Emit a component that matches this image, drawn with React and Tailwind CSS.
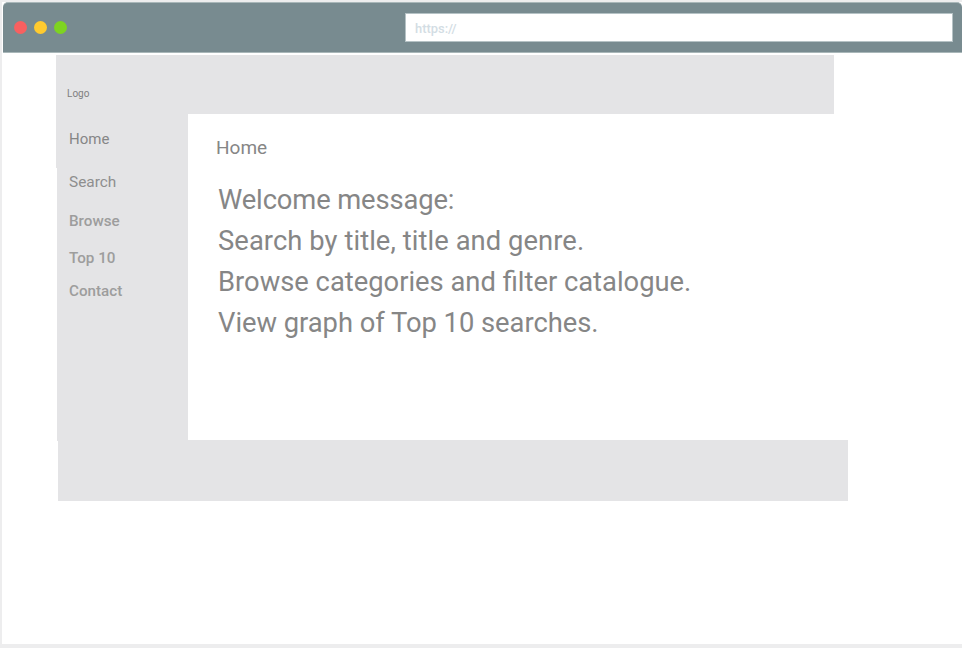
const navItems = [
  { label: "Home", style: "mt-[25px] text-[15px] font-normal text-[#868686]" },
  { label: "Search", style: "mt-[23px] text-[15.4px] font-normal text-[#8e8e8e]" },
  { label: "Browse", style: "mt-[19px] text-[15.2px] font-medium text-[#9d9d9d]" },
  { label: "Top 10", style: "mt-[17px] text-[15.2px] font-medium text-[#9d9d9d]" },
  { label: "Contact", style: "mt-[13px] text-[15.2px] font-medium text-[#9d9d9d]" },
];

const welcomeLines = [
  { text: "Welcome message:", style: "tracking-[-0.12px]" },
  { text: "Search by title, title and genre.", style: "tracking-[0.07px]" },
  { text: "Browse categories and filter catalogue.", style: "tracking-normal" },
  { text: "View graph of Top 10 searches.", style: "tracking-[-0.03px]" },
];

function BrowserBar() {
  return (
    <header className="flex h-[51px] items-start rounded-t-[5px] border-y border-[#a9b7b9] bg-[#788b90] pr-[9px] pl-[11px]">
      <div className="mt-[18px] flex gap-[7px]">
        <span className="size-[13px] rounded-full bg-[#f86060]" />
        <span className="size-[13px] rounded-full bg-[#ffcb2f]" />
        <span className="size-[13px] rounded-full bg-[#7ed321]" />
      </div>
      <div className="mt-[10px] ml-auto flex h-[29px] w-[548px] items-center border border-[#b5c2c5] bg-white pt-[2px] pl-[9px] text-[12.9px] font-medium text-[#d3dde4]">
        https://
      </div>
    </header>
  );
}

function Sidebar() {
  return (
    <nav className="-mb-px flex w-[132px] shrink-0 flex-col bg-[#e4e4e6] [clip-path:polygon(0_0,100%_0,100%_100%,1px_100%,1px_54px,0_54px)]">
      <ul className="-mt-[10px] pl-[13px] leading-5">
        {navItems.map((item) => (
          <li key={item.label} className={item.style}>
            {item.label}
          </li>
        ))}
      </ul>
    </nav>
  );
}

export default function App() {
  return (
    <div className="h-[648px] w-[962px] overflow-hidden bg-[#ededee] pt-[2px] pl-[2px] font-['Roboto',sans-serif]">
      <div className="h-[642px] bg-white">
        <div className="pl-px">
          <BrowserBar />
        </div>
        <div className="mt-[2px] ml-[54px] h-[59px] w-[778px] bg-[#e4e4e6] pt-[33px] pl-[11px] text-[10px] leading-3 text-[#808080]">
          Logo
        </div>
        <div className="ml-[54px] flex h-[326px]">
          <Sidebar />
          <main className="pl-[28px] text-[#868686]">
            <h1 className="mt-[22px] text-[19px] leading-6">Home</h1>
            <div className="mt-5 pl-[2px] text-[27.35px] leading-[41px] whitespace-nowrap">
              {welcomeLines.map((line) => (
                <p key={line.text} className={line.style}>
                  {line.text}
                </p>
              ))}
            </div>
          </main>
        </div>
        <div className="ml-[56px] h-[61px] w-[790px] bg-[#e4e4e6]" />
      </div>
    </div>
  );
}
